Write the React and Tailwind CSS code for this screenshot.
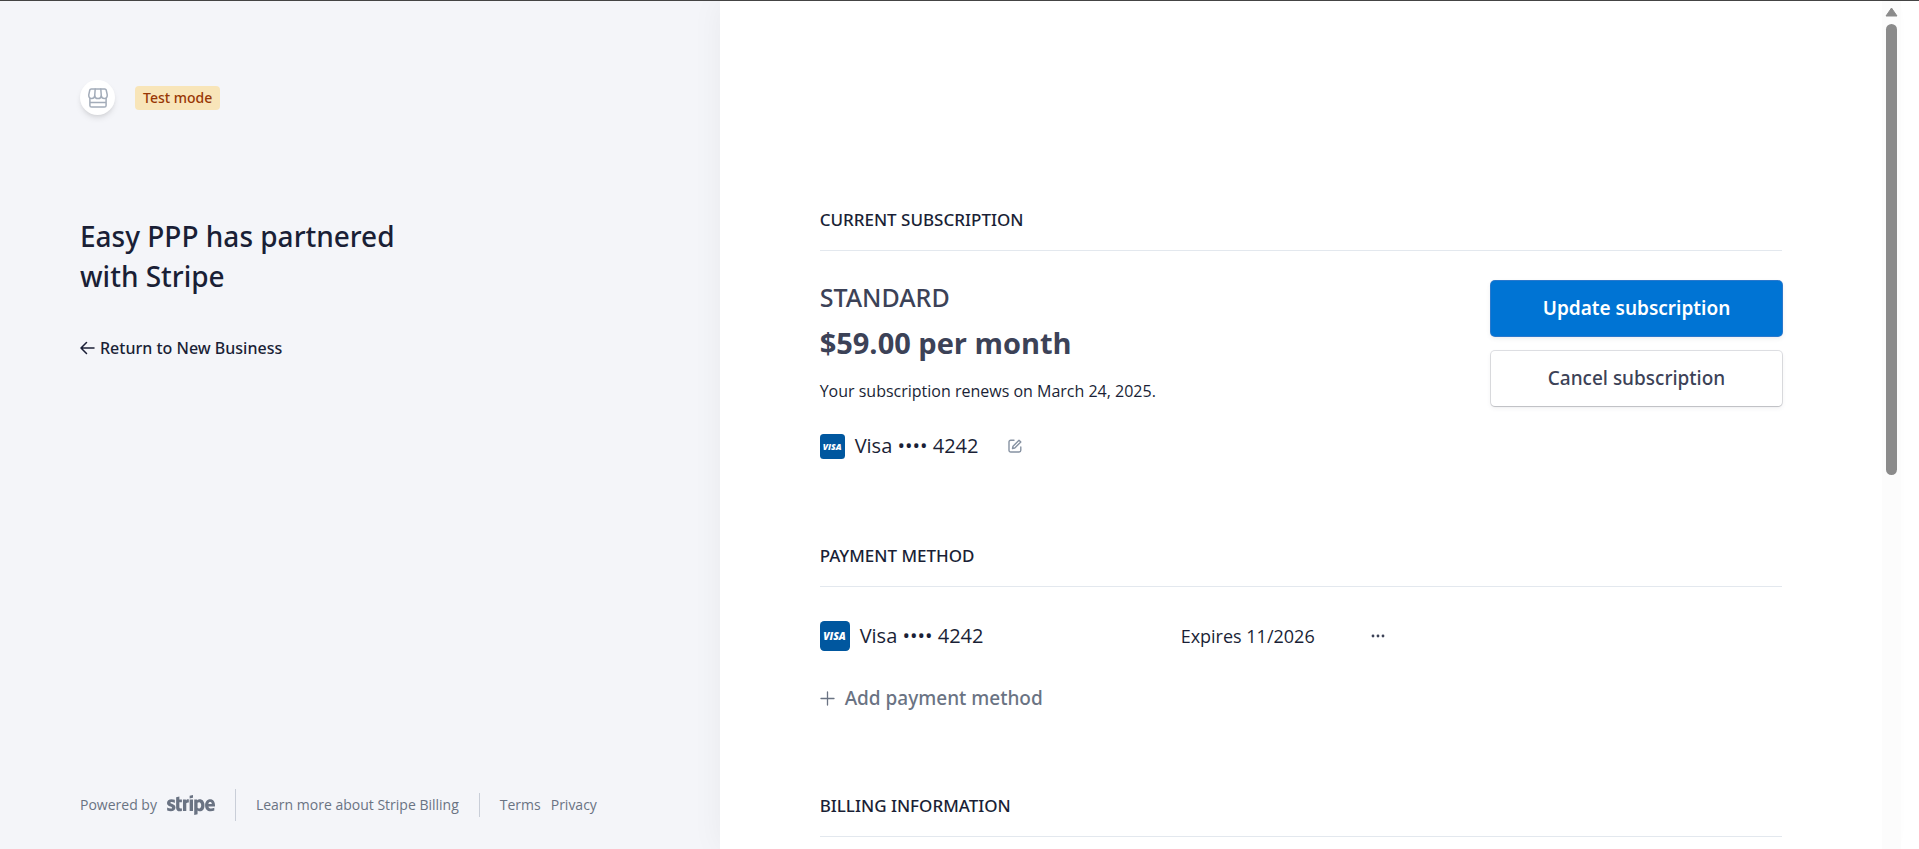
import React from "react";

const bodyFont = "font-['Segoe_UI','Open_Sans',sans-serif]";

function StoreIcon() {
  return (
    <svg viewBox="0 0 20 20" className="size-5" fill="none" stroke="#a3acb9" strokeWidth="1.5" strokeLinejoin="round" strokeLinecap="round" aria-hidden="true">
      <path d="M3.200.9h13.600a1.500 1.500 0 0 1 1.400 1.100l1 4.600v1.200a2.700 2.700 0 0 1-2.900 2.700 3.100 3.100 0 0 1-3-2.700 3.200 3.200 0 0 1-3.300 2.700 3.200 3.200 0 0 1-3.300-2.700 3.100 3.100 0 0 1-3 2.700A2.700 2.700 0 0 1 .8 7.800V6.600L1.800 2A1.500 1.500 0 0 1 3.200.9z" />
      <path d="M7.200 1 6.700 7.800M12.800 1l.5 6.800" />
      <path d="M1.900 10.200v7.200a1.700 1.700 0 0 0 1.700 1.700h12.800a1.700 1.700 0 0 0 1.700-1.700v-7.200M2 14.600h16" />
    </svg>
  );
}

function VisaMark({ className }) {
  return (
    <svg viewBox="0 0 32 32" className={className} role="img" aria-label="Visa">
      <rect width="32" height="32" rx="4.5" fill="#00579f" />
      <text x="15.500" y="20" textAnchor="middle" fontFamily="Open Sans, sans-serif" fontWeight="800" fontStyle="italic" fontSize="11" fill="#fff">VISA</text>
    </svg>
  );
}

function SectionTitle({ children }) {
  return <h2 className="border-b border-[#e3e8ee] pb-[18px] font-['Noto_Sans',sans-serif] text-[17px] leading-6 font-medium text-[#1a1f36] uppercase">{children}</h2>;
}

function Scrollbar() {
  return (
    <div className="flex w-[19px] shrink-0 flex-col items-center bg-[#fcfcfc] pt-1.5" aria-hidden="true">
      <svg viewBox="0 0 13 10" className="h-[10px] w-[13px]"><path d="M6.500 1 12 9H1z" fill="#8b8b8b" stroke="#8b8b8b" strokeLinejoin="round" /></svg>
      <div className="mt-[7px] h-[451px] w-[11px] rounded-full bg-[#8b8b8b]" />
    </div>
  );
}

export default function App() {
  return (
    <div className={`flex h-screen overflow-hidden border-t border-[#444] bg-white ${bodyFont}`}>
      <aside className="flex w-[37.5%] shrink-0 flex-col bg-[#f4f5f9] pt-[79px] pr-5 pb-7 pl-20 text-[#1a1f36]">
        <div className="flex items-center gap-5">
          <div className="flex size-[35px] items-center justify-center rounded-full bg-white shadow-md"><StoreIcon /></div>
          <span className="rounded bg-[#f8e5b9] px-2 font-['Noto_Sans',sans-serif] text-sm leading-6 font-medium text-[#983705]">Test mode</span>
        </div>
        <h1 className="mt-[101px] max-w-[350px] font-['Noto_Sans',sans-serif] text-[28px] leading-10 font-medium">Easy PPP has partnered with Stripe</h1>
        <a href="#return" className="mt-10 flex items-center gap-[5px] font-['Noto_Sans',sans-serif] text-base leading-6 font-medium">
          <svg viewBox="0 0 15 14" className="h-[14px] w-[15px]" fill="none" stroke="currentColor" strokeWidth="1.500" strokeLinecap="round" strokeLinejoin="round" aria-hidden="true"><path d="M14 7H1.200M6.500 1.500 1 7l5.500 5.500" /></svg>
          Return to New Business
        </a>
        <footer className="mt-auto flex items-center text-sm leading-5 text-[#6a7383]">
          <a href="#stripe" className="flex h-8 items-center gap-2.5 border-r border-[#c9ced8] pr-5">
            Powered by
            <svg viewBox="54 36 360.020 149.840" className="h-5 w-12" fill="#6a7383" role="img" aria-label="Stripe">
              <path fillRule="evenodd" d="M414 113.400c0-25.600-12.400-45.800-36.100-45.800-23.800 0-38.200 20.200-38.200 45.600 0 30.100 17 45.300 41.400 45.300 11.900 0 20.900-2.700 27.700-6.500v-20c-6.800 3.400-14.600 5.500-24.500 5.500-9.700 0-18.300-3.400-19.400-15.200h48.900c0-1.300.2-6.500.2-8.900zm-49.400-9.500c0-11.300 6.900-16 13.200-16 6.100 0 12.600 4.700 12.600 16zM301.100 67.600c-9.800 0-16.100 4.600-19.600 7.800l-1.300-6.200h-22v116.600l25-5.300.1-28.300c3.600 2.600 8.900 6.300 17.700 6.300 17.900 0 34.200-14.400 34.200-46.100-.1-29-16.600-44.800-34.100-44.800zm-6 68.900c-5.900 0-9.400-2.100-11.800-4.700l-.1-37.100c2.600-2.900 6.200-4.900 11.900-4.900 9.100 0 15.400 10.200 15.400 23.300 0 13.400-6.200 23.400-15.400 23.400zM223.800 61.700l25.100-5.400V36l-25.100 5.300zM223.800 69.300h25.100v87.500h-25.100zM196.900 76.700l-1.600-7.400h-21.600v87.500h25V97.500c5.900-7.700 15.900-6.300 19-5.200v-23c-3.200-1.200-14.900-3.400-20.800 7.400zM146.900 47.600l-24.400 5.200-.1 80.100c0 14.800 11.100 25.700 25.900 25.700 8.200 0 14.200-1.500 17.500-3.300V135c-3.200 1.300-19 5.900-19-8.900V90.600h19V69.300h-19zM79.300 94.700c0-3.900 3.200-5.400 8.500-5.400 7.600 0 17.200 2.300 24.800 6.400V72.200c-8.300-3.300-16.500-4.600-24.800-4.600C67.500 67.600 54 78.200 54 95.900c0 27.600 38 23.200 38 35.100 0 4.600-4 6.100-9.600 6.100-8.300 0-18.900-3.400-27.300-8v23.800c9.300 4 18.700 5.700 27.300 5.700 20.800 0 35.100-10.300 35.100-28.200-.1-29.800-38.200-24.500-38.200-35.700z" />
            </svg>
          </a>
          <a href="#billing" className="ml-5">Learn more about Stripe Billing</a>
          <nav className="ml-5 flex h-6 items-center gap-2.5 border-l border-[#c9ced8] pl-5"><a href="#terms">Terms</a><a href="#privacy">Privacy</a></nav>
        </footer>
      </aside>
      <main className="min-w-0 flex-1 overflow-hidden bg-white px-[100px] pt-[207px] text-[#1a1f36] shadow-[0_0_30px_rgba(0,0,0,0.05)]">
        <section>
          <SectionTitle>Current subscription</SectionTitle>
          <div className="flex items-start justify-between gap-8 pt-[30px]">
            <div>
              <p className="font-['Noto_Sans',sans-serif] text-[25px] leading-8 font-medium text-[#3c4257]">STANDARD</p>
              <p className="mt-2.5 text-[29px] leading-10 font-bold text-[#3c4257]">$59.00 per month</p>
              <p className="mt-4 text-base leading-6">Your subscription renews on March 24, 2025.</p>
              <div className="mt-[29px] flex items-center gap-2.5 text-xl leading-7">
                <VisaMark className="size-[25px]" />
                <span>Visa •••• 4242</span>
                <button type="button" aria-label="Change payment method" className="ml-5 text-[#8792a2]">
                  <svg viewBox="0 0 14 14" className="size-[14px]" fill="none" stroke="currentColor" strokeWidth="1.400" strokeLinecap="round" strokeLinejoin="round"><path d="M6 1.200H2.700A1.700 1.700 0 0 0 1 2.900v8.400A1.700 1.700 0 0 0 2.700 13h8.400a1.700 1.700 0 0 0 1.700-1.700V8M4.500 9.500l.5-2.300 6-6 1.800 1.800-6 6z" /></svg>
                </button>
              </div>
            </div>
            <div className="flex w-[291px] flex-col gap-[15px]">
              <button type="button" className="h-[55px] rounded bg-[#0074d4] font-['Noto_Sans',sans-serif] text-[19px] font-semibold text-white shadow-[0_0_0_1px_#2a78cc,0_2px_5px_rgba(60,66,87,0.12)]">Update subscription</button>
              <button type="button" className="h-[55px] rounded bg-white font-['Noto_Sans',sans-serif] text-[19px] font-medium text-[#3c4257] shadow-[0_0_0_1px_rgba(60,66,87,0.16),0_1px_1px_rgba(0,0,0,0.12),0_2px_5px_rgba(60,66,87,0.08)]">Cancel subscription</button>
            </div>
          </div>
        </section>
        <section className="mt-[84px]">
          <SectionTitle>Payment method</SectionTitle>
          <div className="flex items-center pt-[34px] text-lg leading-[30px]">
            <div className="flex w-[361px] items-center gap-2.5 text-xl"><VisaMark className="size-[30px]" /><span>Visa •••• 4242</span></div>
            <span className="w-[190px]">Expires 11/2026</span>
            <button type="button" aria-label="More options">
              <svg viewBox="0 0 14 4" className="h-1 w-[14px]" fill="#3c4257"><circle cx="2" cy="2" r="1.400" /><circle cx="7" cy="2" r="1.400" /><circle cx="12" cy="2" r="1.400" /></svg>
            </button>
          </div>
          <button type="button" className="mt-[33px] flex items-center gap-2.5 font-['Noto_Sans',sans-serif] text-[19px] leading-7 font-medium text-[#6a7383]">
            <svg viewBox="0 0 15 15" className="size-[15px]" fill="none" stroke="currentColor" strokeWidth="1.300" strokeLinecap="round" aria-hidden="true"><path d="M7.500 1v13M1 7.500h13" /></svg>
            Add payment method
          </button>
        </section>
        <section className="mt-[82px]"><SectionTitle>Billing information</SectionTitle></section>
      </main>
      <Scrollbar />
      <div className="w-[18px] shrink-0" />
    </div>
  );
}
